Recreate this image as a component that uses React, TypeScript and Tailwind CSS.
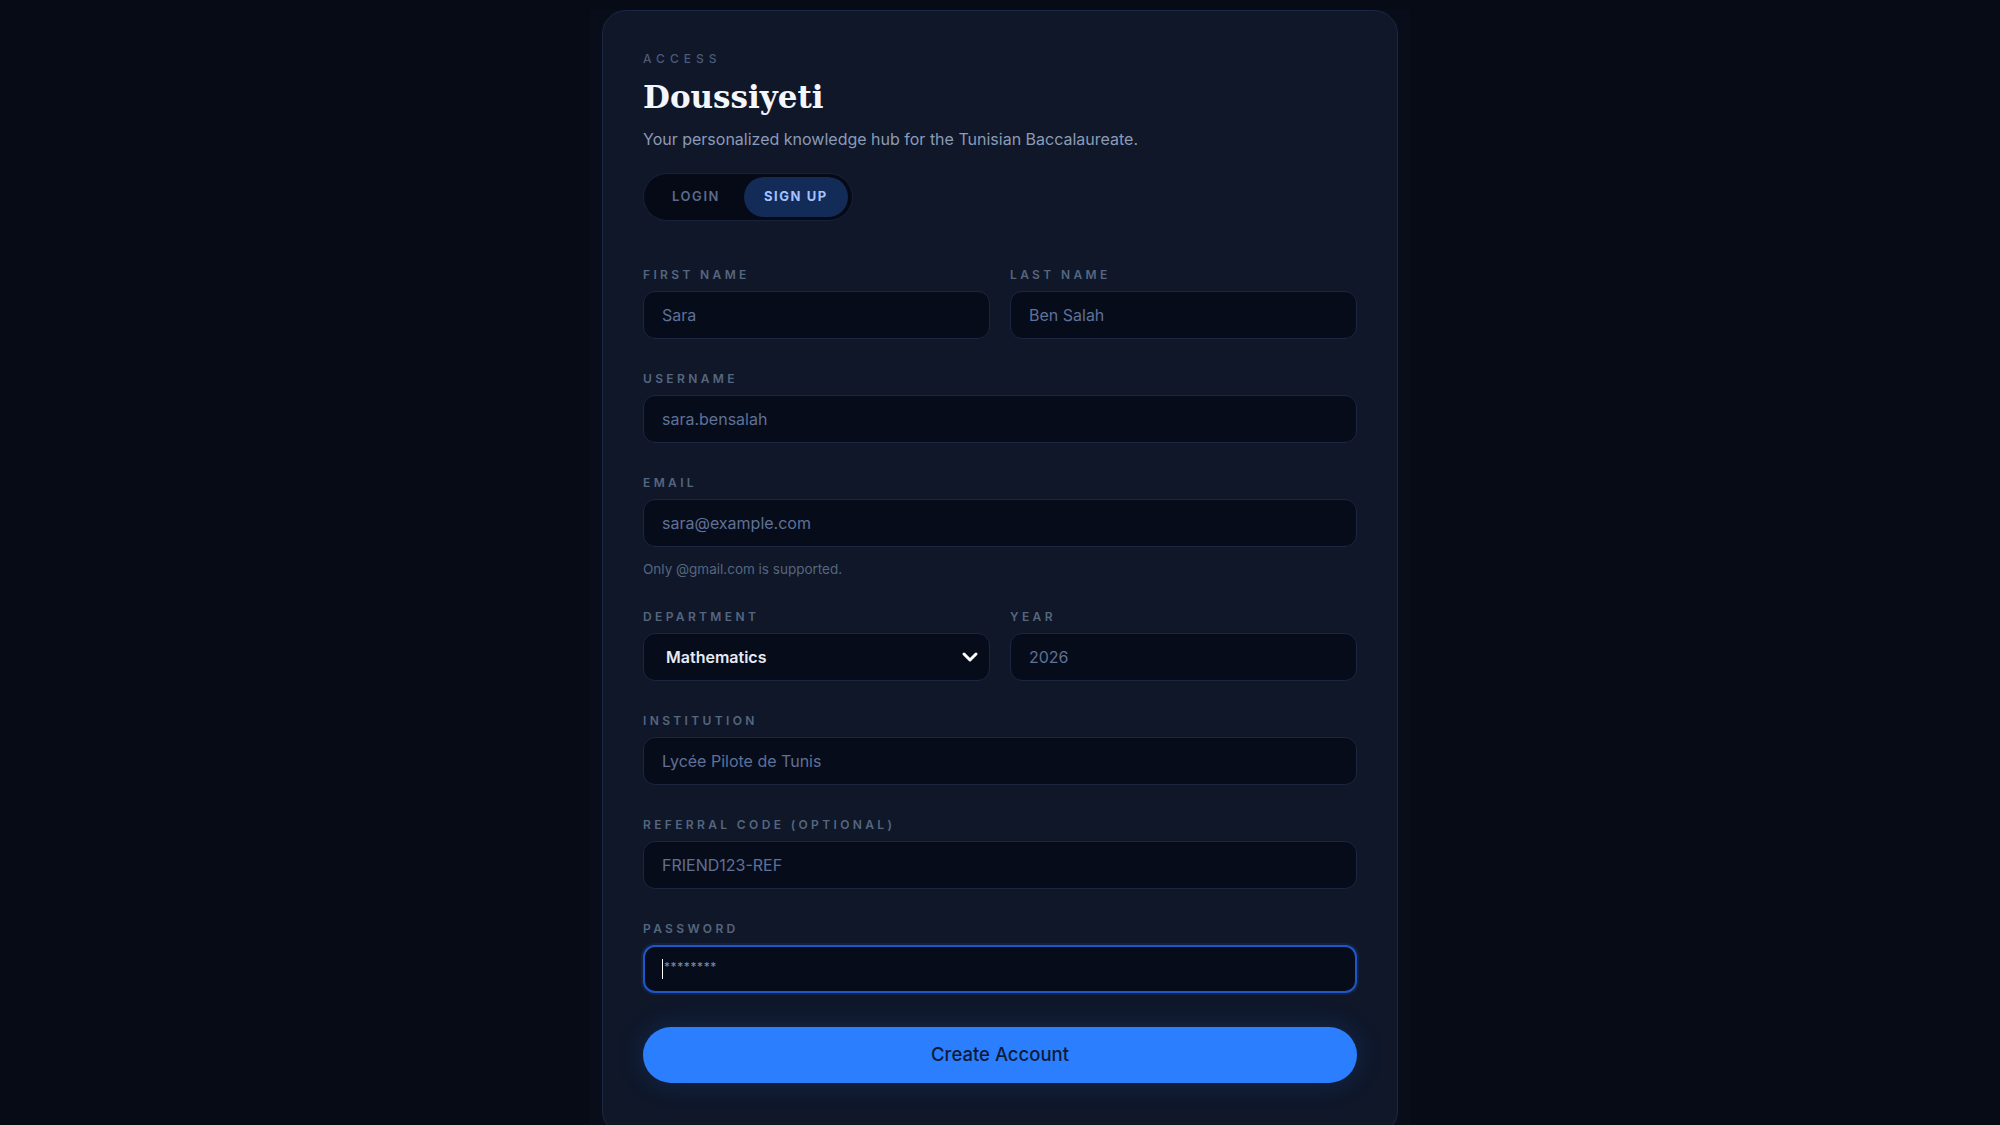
import { ChevronDown } from 'lucide-react'

const Label = ({ children }: { children: React.ReactNode }) => (
	<p className="mb-2 text-[12px] leading-4 font-semibold tracking-[0.28em] text-[#56667f] uppercase">
		{children}
	</p>
)

const Field = ({ label, value }: { label: string; value: string }) => (
	<div className="flex flex-col">
		<Label>{label}</Label>
		<div className="h-12 flex items-center rounded-xl border border-[#1b2640] bg-[#070c1b] px-[18px] text-[16px] text-[#5f7196]">
			{value}
		</div>
	</div>
)

const App = () => {
	return (
		<div
			className="min-h-screen w-full bg-[#070b16] flex justify-center pt-[10px] overflow-hidden"
			style={{ fontFamily: 'Inter, "Noto Sans", sans-serif' }}
		>
			<div className="w-[820px] flex justify-center bg-[#080d19]">
				<div className="w-[796px] h-[1125px] rounded-3xl border border-[#1c2741] bg-[#0f1729] p-10">
					{/* Header */}
					<p className="text-[12px] leading-4 font-medium tracking-[0.42em] text-[#4c5a77]">ACCESS</p>
					<h1
						className="mt-3 text-[31px] leading-9 font-bold text-[#f3f6fb]"
						style={{ fontFamily: '"DejaVu Serif", serif' }}
					>
						Doussiyeti
					</h1>
					<p className="mt-3 text-[16px] leading-6 text-[#8b9bb8]">
						Your personalized knowledge hub for the Tunisian Baccalaureate.
					</p>

					{/* Toggle */}
					<div className="mt-[22px] inline-flex h-12 items-center rounded-full border border-[#18223a] bg-[#050a16] p-1">
						<button className="h-10 px-6 rounded-full text-[13px] font-semibold tracking-[0.12em] text-[#5b6b8b]">
							LOGIN
						</button>
						<button className="h-10 px-[20px] rounded-full bg-[#132b57] text-[13px] font-bold tracking-[0.12em] text-[#a3c3ff]">
							SIGN UP
						</button>
					</div>

					{/* Form */}
					<div className="mt-[46px] flex flex-col gap-8">
						<div className="grid grid-cols-2 gap-5">
							<Field label="First name" value="Sara" />
							<Field label="Last name" value="Ben Salah" />
						</div>
						<Field label="Username" value="sara.bensalah" />
						<div className="flex flex-col">
							<Field label="Email" value="sara@example.com" />
							<p className="mt-[14px] text-[13.5px] leading-4 text-[#56667f]">Only @gmail.com is supported.</p>
						</div>
						<div className="grid grid-cols-2 gap-5">
							<div className="flex flex-col">
								<Label>Department</Label>
								<div className="h-12 flex items-center justify-between rounded-xl border border-[#1b2640] bg-[#070c1b] pl-[22px] pr-[7px] text-[16px] font-semibold text-[#e6ebf3]">
									<span>Mathematics</span>
									<ChevronDown className="h-6 w-6 text-white" strokeWidth={3} />
								</div>
							</div>
							<Field label="Year" value="2026" />
						</div>
						<Field label="Institution" value="Lycée Pilote de Tunis" />
						<Field label="Referral code (optional)" value="FRIEND123-REF" />
						<div className="flex flex-col">
							<Label>Password</Label>
							<div className="h-12 flex items-center rounded-xl border-2 border-[#2157c4] bg-[#070c1b] px-[17px] text-[12px] text-[#7d8caa] tracking-[0.05em] shadow-[0_0_0_2px_rgba(33,87,196,0.18)]">
								<span className="mr-px h-5 w-px bg-white" />
								<span className="-mt-1">********</span>
							</div>
						</div>
					</div>

					<button className="mt-[34px] h-14 w-full rounded-full bg-[#2b7fff] text-[18.5px] font-medium text-[#0e1b38] shadow-[0_0_28px_rgba(43,127,255,0.18)]">
						Create Account
					</button>
				</div>
			</div>
		</div>
	)
}

export default App
